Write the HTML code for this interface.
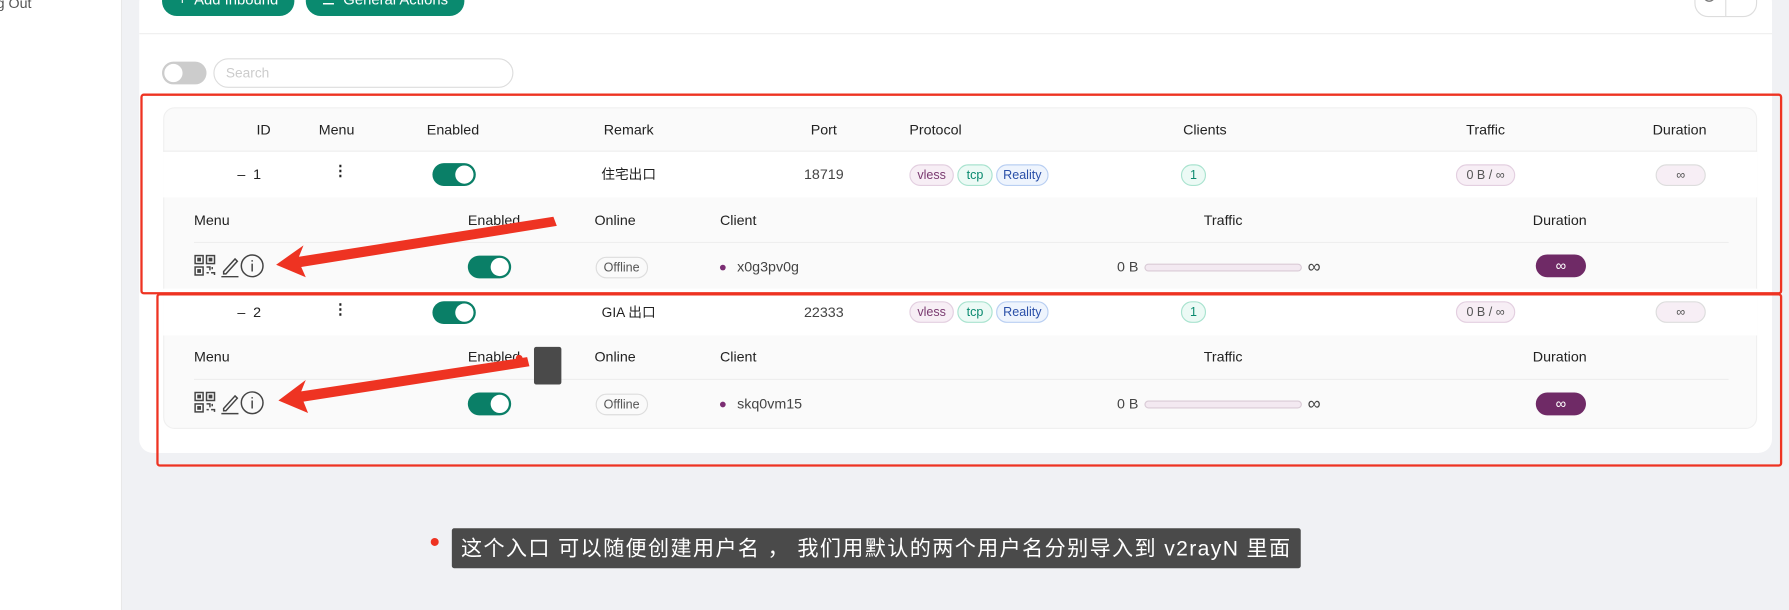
<!DOCTYPE html>
<html><head><meta charset="utf-8"><style>
*{margin:0;padding:0;box-sizing:border-box}
body{width:1789px;height:610px;overflow:hidden;background:#f0f1f4;font-family:"Liberation Sans","Noto Sans CJK SC",sans-serif;color:#222}
#w{position:absolute;left:0;top:0;width:1568px;height:535px;transform:scale(1.141);transform-origin:0 0}
.a{position:absolute}
.t{position:absolute;font-size:12.5px;white-space:nowrap}
.c{transform:translateX(-50%)}
.sw{position:absolute;width:38px;height:20px;border-radius:10px;background:#0a7f67}
.sw:after{content:"";position:absolute;right:2px;top:2px;width:16px;height:16px;border-radius:50%;background:#fff}
.tag{position:absolute;height:19px;border-radius:10px;font-size:11px;padding:0 5px;border:1px solid;display:flex;align-items:center;justify-content:center}
.btn{position:absolute;height:26px;border-radius:13px;background:#0a8a6f;color:#fff;font-size:13px;line-height:24px;padding:0 14px}
.off{position:absolute;height:19px;border:1px solid #ddd;border-radius:10px;font-size:11px;padding:0 6px;color:#555;display:flex;align-items:center}
.bar{position:absolute;width:138px;height:7px;border-radius:4px;background:#f3e9f1;border:1px solid #d9cbd6}
.dot{position:absolute;width:5px;height:5px;border-radius:50%;background:#7b2d73}
.inf{position:absolute;font-size:16px;color:#444;line-height:16px}
</style></head><body><div id="w">
<div class="a" style="left:0;top:0;width:107px;height:535px;background:#fff;border-right:1px solid #e8e8e8"></div>
<div class="t" style="left:-3px;top:-4px;color:#555">g Out</div>
<div class="a" style="left:122px;top:-10px;width:1431px;height:407px;background:#fff;border-radius:12px"></div>
<div class="btn" style="left:142px;top:-12px">+&nbsp; Add Inbound</div>
<div class="btn" style="left:268px;top:-12px">☰&nbsp; General Actions</div>
<div class="a" style="left:1485px;top:-12px;width:55px;height:27px;border:1px solid #ddd;border-radius:12px"></div>
<div class="a" style="left:1512px;top:-10px;width:1px;height:24px;background:#ddd"></div>
<svg class="a" style="left:1490px;top:-6px" width="50" height="16"><circle cx="8" cy="2" r="5" fill="none" stroke="#777" stroke-width="1.2"/><path d="M30 0 l4 4 4-4" fill="none" stroke="#777" stroke-width="1.2"/></svg>
<div class="a" style="left:122px;top:29px;width:1431px;height:1px;background:#eee"></div>
<div class="a" style="left:142px;top:54px;width:39px;height:20px;border-radius:10px;background:#ccc"></div>
<div class="a" style="left:144px;top:56px;width:16px;height:16px;border-radius:50%;background:#fff"></div>
<div class="a" style="left:187px;top:51px;width:263px;height:26px;border:1px solid #ddd;border-radius:13px"></div>
<div class="t" style="left:198px;top:57px;color:#ccc;font-size:12px">Search</div>

<div class="a" style="left:143px;top:94px;width:1397px;height:282px;background:#fafafa;border-radius:10px;border:1px solid #f0f0f0"></div>
<div class="a" style="left:143px;top:133px;width:1397px;height:40px;background:#fff"></div>
<div class="a" style="left:143px;top:253px;width:1397px;height:41px;background:#fff"></div>
<div class="a" style="left:143px;top:132px;width:1397px;height:1px;background:#eee"></div>
<div class="t c" style="left:231px;top:107px">ID</div>
<div class="t c" style="left:295px;top:107px">Menu</div>
<div class="t c" style="left:397px;top:107px">Enabled</div>
<div class="t c" style="left:551px;top:107px">Remark</div>
<div class="t c" style="left:722px;top:107px">Port</div>
<div class="t" style="left:797px;top:107px">Protocol</div>
<div class="t c" style="left:1056px;top:107px">Clients</div>
<div class="t c" style="left:1302px;top:107px">Traffic</div>
<div class="t c" style="left:1472px;top:107px">Duration</div>

<div class="t" style="left:208px;top:146px">–&nbsp; 1</div>
<div class="t" style="left:292px;top:142px;font-weight:bold">⋮</div>
<div class="sw" style="left:379px;top:143px"></div>
<div class="t c" style="left:551px;top:146px;font-size:12px;line-height:14px">住宅出口</div>
<div class="t c" style="left:722px;top:146px;color:#444">18719</div>
<div class="tag" style="left:797px;top:144px;width:39px;background:#f7eef5;border-color:#e3cfe0;color:#7a3a70">vless</div>
<div class="tag" style="left:839px;top:144px;width:31px;background:#ecfaf5;border-color:#a9e3cf;color:#0a8a6f">tcp</div>
<div class="tag" style="left:873px;top:144px;width:46px;background:#eef4fd;border-color:#b9cff2;color:#2a4fa8">Reality</div>
<div class="tag" style="left:1035px;top:144px;width:22px;background:#ecfaf5;border-color:#a9e3cf;color:#0a8a6f">1</div>
<div class="tag" style="left:1276px;top:144px;width:52px;background:#f7eef5;border-color:#e3cfe0;color:#555">0 B / ∞</div>
<div class="tag" style="left:1451px;top:144px;width:44px;background:#f7eef5;border-color:#ddd;color:#555">∞</div>

<div class="t" style="left:170px;top:186px">Menu</div>
<div class="t c" style="left:433px;top:186px">Enabled</div>
<div class="t" style="left:521px;top:186px">Online</div>
<div class="t" style="left:631px;top:186px">Client</div>
<div class="t c" style="left:1072px;top:186px">Traffic</div>
<div class="t c" style="left:1367px;top:186px">Duration</div>
<div class="a" style="left:170px;top:212px;width:1345px;height:1px;background:#eee"></div>
<div class="sw" style="left:410px;top:224px"></div>
<div class="off" style="left:522px;top:225px">Offline</div>
<div class="dot" style="left:631px;top:232px"></div>
<div class="t" style="left:646px;top:227px;color:#444">x0g3pv0g</div>
<div class="t" style="left:979px;top:227px;color:#444">0 B</div>
<div class="bar" style="left:1003px;top:231px"></div>
<div class="inf" style="left:1146px;top:227px">∞</div>
<div class="a" style="left:1346px;top:223px;width:44px;height:20px;border-radius:10px;background:#6f2a66;color:#fff;text-align:center;font-size:13px;line-height:20px">∞</div>

<div class="t" style="left:208px;top:267px">–&nbsp; 2</div>
<div class="t" style="left:292px;top:263px;font-weight:bold">⋮</div>
<div class="sw" style="left:379px;top:264px"></div>
<div class="t c" style="left:551px;top:267px;font-size:12px;line-height:14px">GIA 出口</div>
<div class="t c" style="left:722px;top:267px;color:#444">22333</div>
<div class="tag" style="left:797px;top:264px;width:39px;background:#f7eef5;border-color:#e3cfe0;color:#7a3a70">vless</div>
<div class="tag" style="left:839px;top:264px;width:31px;background:#ecfaf5;border-color:#a9e3cf;color:#0a8a6f">tcp</div>
<div class="tag" style="left:873px;top:264px;width:46px;background:#eef4fd;border-color:#b9cff2;color:#2a4fa8">Reality</div>
<div class="tag" style="left:1035px;top:264px;width:22px;background:#ecfaf5;border-color:#a9e3cf;color:#0a8a6f">1</div>
<div class="tag" style="left:1276px;top:264px;width:52px;background:#f7eef5;border-color:#e3cfe0;color:#555">0 B / ∞</div>
<div class="tag" style="left:1451px;top:264px;width:44px;background:#f7eef5;border-color:#ddd;color:#555">∞</div>

<div class="t" style="left:170px;top:306px">Menu</div>
<div class="t c" style="left:433px;top:306px">Enabled</div>
<div class="t" style="left:521px;top:306px">Online</div>
<div class="t" style="left:631px;top:306px">Client</div>
<div class="t c" style="left:1072px;top:306px">Traffic</div>
<div class="t c" style="left:1367px;top:306px">Duration</div>
<div class="a" style="left:170px;top:332px;width:1345px;height:1px;background:#eee"></div>
<div class="sw" style="left:410px;top:344px"></div>
<div class="off" style="left:522px;top:345px">Offline</div>
<div class="dot" style="left:631px;top:352px"></div>
<div class="t" style="left:646px;top:347px;color:#444">skq0vm15</div>
<div class="t" style="left:979px;top:347px;color:#444">0 B</div>
<div class="bar" style="left:1003px;top:351px"></div>
<div class="inf" style="left:1146px;top:347px">∞</div>
<div class="a" style="left:1346px;top:344px;width:44px;height:20px;border-radius:10px;background:#6f2a66;color:#fff;text-align:center;font-size:13px;line-height:20px">∞</div>

<svg class="a" style="left:0;top:0" width="1568" height="535">
<defs><g id="ic" fill="none" stroke="#444" stroke-width="1.3">
<rect x="0" y="0" width="7" height="7"/><rect x="10" y="0" width="7" height="7"/><rect x="0" y="10" width="7" height="7"/>
<rect x="2.5" y="2.5" width="2" height="2" fill="#444"/><rect x="12.5" y="2.5" width="2" height="2" fill="#444"/><rect x="2.5" y="12.5" width="2" height="2" fill="#444"/>
<path d="M10 10h3v3M15 10v2M10 15h2M14 15h3v2"/>
<path d="M25 14 L35 3 L37 5 L27 16 L25 16 Z M23 18.5 H38"/>
<circle cx="50" cy="9" r="9.5"/><path d="M50 7v7M50 4v1.3"/>
</g></defs>
<use href="#ic" x="171" y="224"/>
<use href="#ic" x="171" y="344"/>
<polygon points="485,190 262,225 266,215 242,232 268,243 264,234 488,198" fill="#ee3322"/>
<polygon points="462,313 264,343 268,333 244,351 270,362 266,352 464,321" fill="#ee3322"/>
<circle cx="455" cy="314" r="3" fill="#ee3322"/>
<circle cx="381" cy="475" r="3.5" fill="#ee3322"/>
</svg>
<div class="a" style="left:123px;top:82px;width:1439px;height:176px;border:2px solid #ee3322;border-radius:3px"></div>
<div class="a" style="left:137px;top:257px;width:1425px;height:152px;border:2px solid #ee3322;border-radius:3px"></div>
<div class="a" style="left:468px;top:304px;width:24px;height:33px;background:#4a4a4a;border-radius:2px"></div>
<div class="a" style="left:396px;top:463px;width:744px;height:35px;background:#4a4a4a;border-radius:2px"></div>
<div class="t" style="left:404px;top:470px;color:#fff;font-size:18.5px;line-height:22px;letter-spacing:1.2px">这个入口 可以随便创建用户名 ， 我们用默认的两个用户名分别导入到 v2rayN 里面</div>
</div></body></html>
